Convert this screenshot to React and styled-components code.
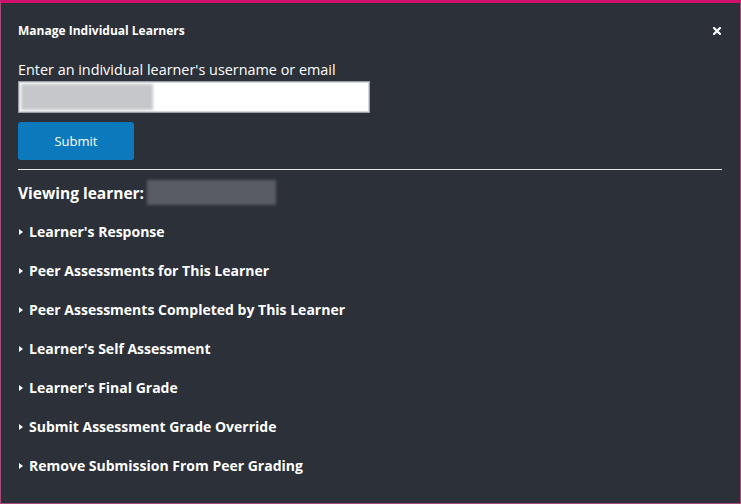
import React, { useState } from "react";
import styled, { createGlobalStyle } from "styled-components";

const GlobalStyle = createGlobalStyle`
  html, body {
    margin: 0;
    padding: 0;
    background: #2c3039;
  }
  * {
    box-sizing: border-box;
  }
`;

const sections = [
  "Learner's Response",
  "Peer Assessments for This Learner",
  "Peer Assessments Completed by This Learner",
  "Learner's Self Assessment",
  "Learner's Final Grade",
  "Submit Assessment Grade Override",
  "Remove Submission From Peer Grading",
];

const App = () => {
  const [q, setQ] = useState("");

  return (
    <React.Fragment>
      <GlobalStyle />
      <Modal>
        <Header>
          <Title>Manage Individual Learners</Title>
          <CloseBtn aria-label="close">
            <svg width="8" height="8" viewBox="0 0 8 8">
              <path
                d="M1 1 L7 7 M7 1 L1 7"
                stroke="#ffffff"
                strokeWidth="2.2"
                strokeLinecap="square"
              />
            </svg>
          </CloseBtn>
        </Header>
        <Body>
          <Label htmlFor="learner">
            Enter an individual learner's username or email
          </Label>
          <InputBox>
            <BlurChip $w="132px" $h="26px" $color="#c6c7ca" />
            <TextInput
              id="learner"
              value={q}
              onChange={(e) => setQ(e.target.value)}
            />
          </InputBox>
          <SubmitBtn>Submit</SubmitBtn>
          <Divider />
          <Viewing>
            Viewing learner:
            <BlurChip $w="129px" $h="25px" $color="#595c64" />
          </Viewing>
          <SectionList>
            {sections.map((s) => (
              <SectionItem key={s}>
                <Caret />
                {s}
              </SectionItem>
            ))}
          </SectionList>
        </Body>
      </Modal>
    </React.Fragment>
  );
};

export default App;

const Modal = styled.div`
  width: 741px;
  height: 504px;
  background: #2c3039;
  border-top: 3px solid #d1106c;
  border-left: 1px solid #a8497c;
  border-right: 1px solid #a8497c;
  border-bottom: 1px solid #a8497c;
  font-family: "Open Sans", "Liberation Sans", sans-serif;
  color: #ffffff;
  display: flex;
  flex-direction: column;
`;

const Header = styled.div`
  display: flex;
  justify-content: space-between;
  align-items: center;
  padding: 20px 19px 0 17px;
`;

const Title = styled.h2`
  margin: 0;
  font-size: 12px;
  line-height: 16px;
  font-weight: 700;
`;

const CloseBtn = styled.button`
  background: none;
  border: none;
  padding: 0;
  display: flex;
  align-items: center;
  cursor: pointer;
`;

const Body = styled.div`
  padding: 21px 18px 0 17px;
  display: flex;
  flex-direction: column;
  align-items: flex-start;
`;

const Label = styled.label`
  font-size: 14.4px;
  line-height: 20px;
  margin-bottom: 1px;
`;

const InputBox = styled.div`
  width: 352px;
  height: 32px;
  background: #ffffff;
  border: 1px solid #9a9ea5;
  box-shadow: inset 0 0 0 1px #d6d8db;
  padding: 2px;
  display: flex;
  align-items: center;
`;

const BlurChip = styled.span`
  display: inline-block;
  width: ${({ $w }) => $w};
  height: ${({ $h }) => $h};
  background: ${({ $color }) => $color};
  filter: blur(1.5px);
  flex-shrink: 0;
`;

const TextInput = styled.input`
  flex: 1;
  min-width: 0;
  height: 100%;
  border: none;
  outline: none;
  background: transparent;
  font-family: inherit;
  font-size: 14px;
`;

const SubmitBtn = styled.button`
  margin-top: 9px;
  width: 116px;
  height: 38px;
  border: none;
  border-radius: 3px;
  background: #0b79bb;
  color: #ffffff;
  font-family: inherit;
  font-size: 13px;
  cursor: pointer;
`;

const Divider = styled.hr`
  align-self: stretch;
  margin: 9px 0 0;
  border: none;
  border-top: 1px solid #e6e6e6;
`;

const Viewing = styled.h3`
  margin: 10px 0 0;
  font-size: 15.5px;
  line-height: 24px;
  font-weight: 700;
  display: flex;
  align-items: center;
  gap: 3px;
`;

const SectionList = styled.ul`
  list-style: none;
  margin: 17px 0 0;
  padding: 0;
  display: flex;
  flex-direction: column;
  gap: 19px;
`;

const SectionItem = styled.li`
  font-size: 14px;
  line-height: 20px;
  font-weight: 700;
  display: flex;
  align-items: center;
  cursor: pointer;
`;

const Caret = styled.span`
  width: 0;
  height: 0;
  margin: 0 6px 0 1px;
  border-top: 3.5px solid transparent;
  border-bottom: 3.5px solid transparent;
  border-left: 4px solid #ffffff;
`;
